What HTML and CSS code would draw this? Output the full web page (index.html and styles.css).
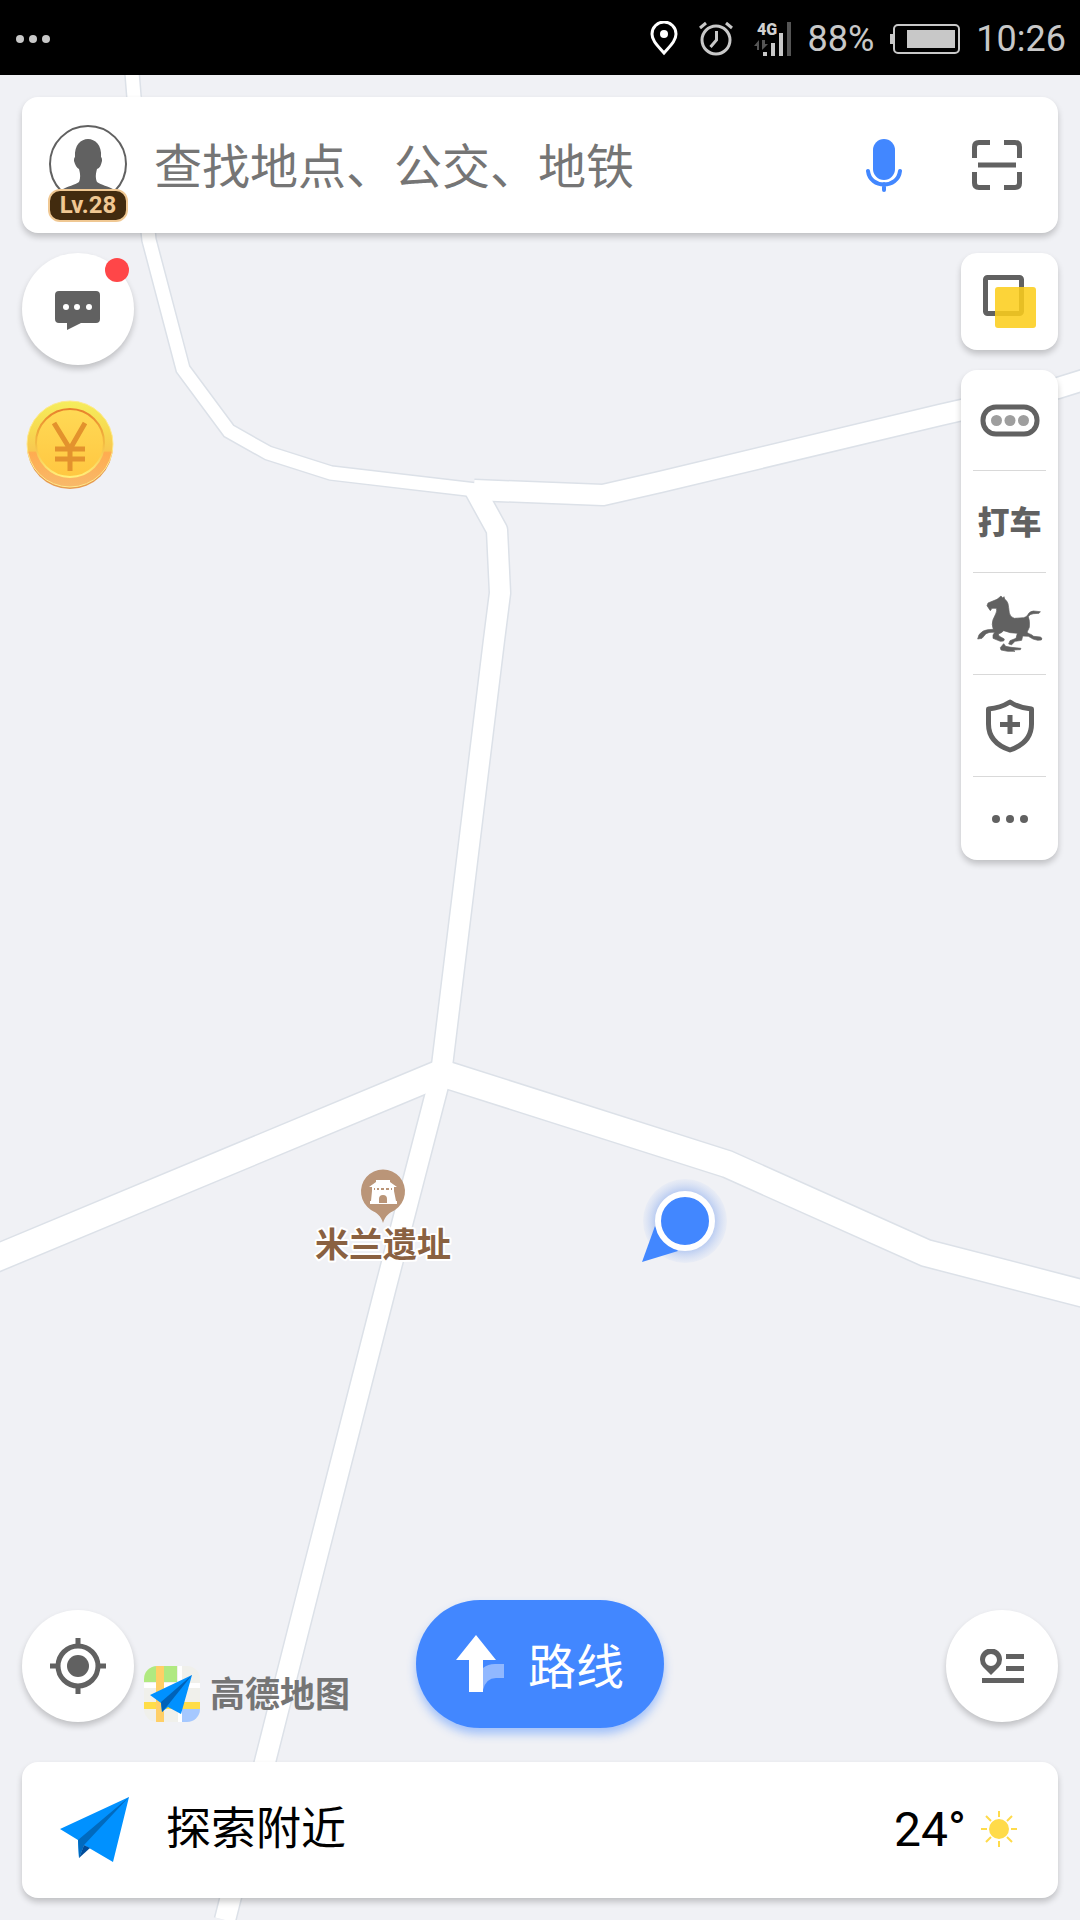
FILE: index.html
```html
<!DOCTYPE html>
<html lang="zh-CN">
<head>
<meta charset="utf-8">
<meta name="viewport" content="width=device-width, initial-scale=1">
<title>高德地图</title>
<link rel="stylesheet" href="styles.css">
</head>
<body>
<div class="app">
  <header class="status">
    <svg class="status-more" width="36" height="8" viewBox="0 0 36 8" fill="#c8c8c8"><circle cx="4" cy="4" r="4"/><circle cx="17" cy="4" r="4"/><circle cx="30" cy="4" r="4"/></svg>
    <div class="status-icons">
      <svg width="28" height="36" viewBox="0 0 28 36"><path d="M14 32C8 25 2 20 2 13a12 12 0 0 1 24 0c0 7-6 12-12 19z" fill="none" stroke="#fff" stroke-width="3"/><circle cx="14" cy="13" r="4" fill="#fff"/></svg>
      <svg class="alarm" width="34" height="36" viewBox="0 0 34 36" fill="none" stroke="#c8c8c8" stroke-width="3"><circle cx="17" cy="19" r="14"/><path d="M17.500 10v9l-6 7M1 7l6-5M27 2l6 5"/></svg>
      <svg width="38" height="42" viewBox="0 -4 38 42"><text class="net-label" x="3" y="13" fill="#d0d0d0">4G</text><g fill="#c8c8c8"><path d="M9 30h4v4H9zM17 21h4v13h-4zM25 11h4v23h-4z"/><path d="M33 0h4v34h-4z" fill="#555"/><path d="M0 24l5-6v10H3v-4zM8 18v10l6-6h-3v-4z" fill="#555"/></g></svg>
      <span class="percent">88%</span>
      <svg width="70" height="32" viewBox="0 0 70 32"><rect x="4" y="2" width="65" height="28" rx="4" fill="none" stroke="#c8c8c8" stroke-width="2"/><path d="M0 11h4v10H0zM17 7h48v18H17z" fill="#c8c8c8"/></svg>
      <time>10:26</time>
    </div>
  </header>

  <main class="stage">
    <svg class="map" viewBox="0 75 1080 1845" preserveAspectRatio="xMidYMid slice" role="img" aria-label="地图">
      <defs>
        <g id="roads" fill="none">
          <path class="road-s" d="M131 60L134 97 149 240 183 369 229 431 268 453 331 473 476 490"/>
          <path class="road-m" d="M474 490L603 495 660 482 940 415 1058 388 1090 378"/>
          <path class="road-m" d="M475 490L497 530 500 593 494 640 441 1074 385 1290 311 1580 225 1920"/>
          <path class="road-l" d="M-20 1265L441 1073 727 1164 926 1253 1100 1298"/>
        </g>
        <radialGradient id="glow"><stop offset="0.6" stop-color="#6f98ea" stop-opacity="0.600"/><stop offset="1" stop-color="#a9c3f5" stop-opacity="0.100"/></radialGradient>
      </defs>
      <use href="#roads" class="casing"/>
      <use href="#roads" class="surface"/>
      <path d="M383 1223c-2-7-6-10-12-13a22 22 0 1 1 24 0c-6 3-10 6-12 13z" fill="#ba9578"/>
      <path d="M376 1180h14v2l7 5h-3v4h-22v-4h-3l7-5zM372 1191h22l2 10h1v3H370v-3h1z" fill="#fff"/>
      <path d="M379 1203v-4a4 4 0 0 1 8 0v4zM374 1188h18v2h-18z" fill="#ba9578"/>
      <path d="M376 1187v4M380 1187v4M385 1187v4M390 1187v4" stroke="#fff" stroke-width="2"/>
      <text class="poi" x="383" y="1257" text-anchor="middle">米兰遗址</text>
      <circle cx="685" cy="1221" r="42" fill="url(#glow)"/>
      <path d="M655 1226L642 1262 678 1251z" fill="#4287ff"/>
      <circle cx="685" cy="1221" r="27" fill="#4287ff" stroke="#fff" stroke-width="6"/>
    </svg>

    <div class="overlay">
      <form class="card search">
        <button type="button" class="avatar" aria-label="我的账户">
          <svg width="80" height="80" viewBox="0 0 80 80"><circle cx="40" cy="40" r="38" fill="#fff" stroke="#616161" stroke-width="2"/><path d="M13 66c7-4 14-5 18-8 2-5 1-9 0-13-2-1-4-4-5-8 0-2 0-3 1-4-2-24 28-24 26 0 1 1 1 2 1 4-1 4-2 7-5 8-1 4-2 8 0 13 4 3 11 4 18 8l-14 8H27z" fill="#616161"/></svg>
          <span class="level">Lv.28</span>
        </button>
        <input class="query" type="text" aria-label="搜索" placeholder="查找地点、公交、地铁">
        <button type="button" aria-label="语音搜索"><svg width="36" height="53" viewBox="0 0 36 53"><rect x="7" width="22" height="41" rx="11" fill="#4287ff"/><path d="M2 32c2 18 30 18 32 0M18 45v6" fill="none" stroke="#4287ff" stroke-width="4" stroke-linecap="round"/></svg></button>
        <button type="button" aria-label="扫一扫"><svg width="50" height="50" viewBox="0 0 50 50" fill="none" stroke="#616161" stroke-width="5"><path d="M2.500 18V7q0-4.500 4.500-4.500h11M32 2.500h11q4.500 0 4.500 4.500v11M47.500 32v11q0 4.500-4.500 4.500H32M18 47.500H7q-4.500 0-4.500-4.500V32M6 25h38"/></svg></button>
      </form>

      <div class="sides">
        <div class="left">
          <button type="button" class="round message" aria-label="消息">
            <svg width="46" height="40" viewBox="0 0 46 40"><path d="M4 0h37a4 4 0 0 1 4 4v24a4 4 0 0 1-4 4H26l-14 7v-7H4a4 4 0 0 1-4-4V4a4 4 0 0 1 4-4z" fill="#616161"/><g fill="#fff"><circle cx="11" cy="16" r="3"/><circle cx="22" cy="16" r="3"/><circle cx="34" cy="16" r="3"/></g></svg>
            <span class="dot"></span>
          </button>
          <button type="button" class="coin" aria-label="金币">
            <svg width="88" height="90" viewBox="0 0 88 90"><defs><linearGradient id="rim" x2="0" y2="1"><stop stop-color="#f5ed5c"/><stop offset="0.350" stop-color="#f7d950"/><stop offset="0.580" stop-color="#f8c750"/><stop offset="0.600" stop-color="#ffac50"/><stop offset="1" stop-color="#f8b96a"/></linearGradient><linearGradient id="ring" x2="0" y2="1"><stop stop-color="#e8802b"/><stop offset="0.500" stop-color="#f3bb42"/><stop offset="1" stop-color="#fff07b"/></linearGradient><linearGradient id="face" x2="0" y2="1"><stop stop-color="#ffd955"/><stop offset="1" stop-color="#ffc741"/></linearGradient></defs><circle cx="44" cy="46" r="43" fill="#e79c51"/><circle cx="44" cy="44" r="43" fill="url(#rim)" stroke="#ffe98c"/><circle cx="44" cy="43" r="34" fill="url(#face)" stroke="url(#ring)" stroke-width="2"/><path d="M28 23l16 26 15-26M44 47v24M29 49h30M29 59h30" fill="none" stroke="#e3922d" stroke-width="5"/></svg>
          </button>
        </div>
        <div class="right">
          <button type="button" class="card layers" aria-label="图层"><svg width="54" height="54" viewBox="0 0 54 54"><rect x="2.500" y="2.500" width="36" height="36" rx="2" fill="none" stroke="#616161" stroke-width="5"/><rect x="12" y="12" width="41" height="41" rx="3" fill="#fcce1c" fill-opacity="0.870"/></svg></button>
          <nav class="card tools" aria-label="工具">
            <button type="button" aria-label="路况"><svg width="60" height="33" viewBox="0 0 60 33"><rect x="3" y="3" width="54" height="27" rx="13" fill="none" stroke="#616161" stroke-width="5"/><g fill="#9e9e9e"><circle cx="16.500" cy="16.500" r="5.500"/><circle cx="30" cy="16.500" r="5.500"/><circle cx="43.500" cy="16.500" r="5.500"/></g></svg></button>
            <button type="button" class="taxi">打车</button>
            <button type="button" aria-label="旅游"><svg width="66" height="57" viewBox="18 48 198 171" fill="#616161" stroke="#616161" stroke-width="2" stroke-linejoin="round"><path d="M83 57L90 51 95 57 99 53 101 60Q109 66 111 74L113 86 115 102Q118 115 130 118L158 116Q166 115 170 108 175 97 187 96L208 98 204 103 188 104Q176 105 172 113 177 125 175 145L168 160 174 164Q182 166 188 172L208 174Q216 178 211 183L200 184 186 180 172 172 155 171 152 184 132 187 122 197 113 195 117 185 135 178 139 163 118 161 98 155 91 161 82 165 84 171 100 180 98 186 88 187 66 178 66 168 71 160Q54 158 45 164L33 178 20 180 24 167Q35 153 50 152L67 151Q61 136 66 122L74 105Q79 95 76 88L63 88 58 95 48 80 51 72 78 61Z"/><path d="M88 206L98 194 104 202 120 205 150 208 148 212 126 213 132 217 110 217 90 213Z"/></svg></button>
            <button type="button" aria-label="安全"><svg width="50" height="54" viewBox="0 0 50 54"><path d="M25 3q9 6 21.500 7v15c0 14-10 22-21.500 26C13 47 3.500 39 3.500 25V10q12-1 21.500-7z" fill="none" stroke="#616161" stroke-width="5" stroke-linejoin="round"/><path d="M25 16v19M15 25.500h20" stroke="#616161" stroke-width="5"/></svg></button>
            <button type="button" aria-label="更多"><svg width="36" height="8" viewBox="0 0 36 8" fill="#616161"><circle cx="4" cy="4" r="4"/><circle cx="18" cy="4" r="4"/><circle cx="32" cy="4" r="4"/></svg></button>
          </nav>
        </div>
      </div>

      <div class="actions">
        <div class="actions-left">
          <button type="button" class="round" aria-label="定位"><svg width="56" height="56" viewBox="0 0 56 56"><circle cx="28" cy="28" r="20" fill="none" stroke="#616161" stroke-width="5"/><circle cx="28" cy="28" r="11" fill="#616161"/><path d="M28 0v8M28 48v8M0 28h8M48 28h8" stroke="#616161" stroke-width="5"/></svg></button>
          <div class="brand">
            <svg width="56" height="56" viewBox="0 0 56 56"><defs><clipPath id="tile"><rect width="56" height="56" rx="13"/></clipPath></defs><g clip-path="url(#tile)"><path d="M0 0h56v56H0z" fill="#f0f0eb"/><path d="M0 0h33v16H0z" fill="#b0e980"/><path d="M34 0h4v56h-4zM0 17h56v5H0z" fill="#fff"/><path d="M0 36h56v7H0z" fill="#ffdd48"/><path d="M38 43h18v13H38z" fill="#a5c8ff"/><path d="M12 0h8v56h-8z" fill="#ffcf66"/></g><path d="M6 29L48 9 37 48 24 41l-6 5-1-9z" fill="#0091ff"/><path d="M48 9L17 36l1 10 6-7z" fill="#0062b8"/></svg>
            <span>高德地图</span>
          </div>
        </div>
        <button type="button" class="route"><svg width="48" height="57" viewBox="0 0 48 57"><path d="M27 33q5-4 12-4h9v14h-8q-10 0-13 12z" fill="#91b8ff"/><path d="M20 0l20 25H27v32H13V25H0z" fill="#fff"/></svg><span>路线</span></button>
        <button type="button" class="round places" aria-label="收藏地点"><svg width="44" height="34" viewBox="0 0 44 34"><path d="M11 26L3 18a11 11 0 1 1 16 0zM11 5a6 6 0 1 0 0 12 6 6 0 0 0 0-12z" fill="#616161" fill-rule="evenodd"/><path d="M26 5h18v5H26zM26 17h18v5H26zM2 29h42v5H2z" fill="#616161"/></svg></button>
      </div>

      <footer class="card nearby">
        <a href="#nearby" class="explore"><svg width="70" height="66" viewBox="0 0 70 66"><path d="M0 32L69 0 53 65 24 48 19 61 18 43z" fill="#0091ff"/><path d="M69 0L18 43l1 18 5-13z" fill="#006abf"/><path d="M24 48l6 3-11 10z" fill="#004c9a"/></svg><span>探索附近</span></a>
        <span class="weather">24° <svg width="38" height="38" viewBox="0 0 38 38"><circle cx="19" cy="19" r="10" fill="#ffdb4a"/><path d="M19 1v6M19 31v6M1 19h6M31 19h6M6 6l5 5M27 27l5 5M32 6l-5 5M11 27l-5 5" stroke="#ffdb4a" stroke-width="2"/></svg></span>
      </footer>
    </div>
  </main>
</div>
</body>
</html>
```
FILE: styles.css
```css
* { box-sizing: border-box; }

body {
  margin: 0;
  font-family: Roboto, "Noto Sans CJK SC", sans-serif;
  color: #000;
}

svg { display: block; flex: none; }

button {
  display: flex;
  align-items: center;
  justify-content: center;
  padding: 0;
  border: 0;
  background: none;
  font: inherit;
  color: #616161;
}

.app {
  display: flex;
  flex-direction: column;
  min-height: 100vh;
}

/* Status bar */
.status {
  display: flex;
  align-items: center;
  justify-content: space-between;
  height: 75px;
  padding: 2px 14px 0 16px;
  background: #000;
  color: #c8c8c8;
  font-size: 36px;
  line-height: 40px;
}

.status-icons {
  display: flex;
  align-items: center;
  gap: 16px;
}

.alarm { margin: 0 5px; }

.net-label { font: 900 16px Roboto, sans-serif; }

/* Map */
.stage {
  position: relative;
  display: flex;
  flex: 1;
  background: #f0f1f5;
}

.map {
  position: absolute;
  inset: 0;
  width: 100%;
  height: 100%;
}

.casing {
  --edge: 3px;
  stroke: #dce1e8;
}

.surface {
  --edge: 0px;
  stroke: #fff;
}

.road-s { stroke-width: calc(13px + var(--edge)); }
.road-m { stroke-width: calc(20px + var(--edge)); stroke-linejoin: round; }
.road-l { stroke-width: calc(26px + var(--edge)); }

.poi {
  font: 700 34px "Noto Sans CJK SC", sans-serif;
  fill: #8a6141;
  stroke: #fff;
  stroke-width: 4px;
  stroke-linejoin: round;
  paint-order: stroke;
}

/* Controls above the map */
.overlay {
  position: relative;
  display: flex;
  flex: 1;
  flex-direction: column;
  padding: 22px;
}

.card {
  border-radius: 16px;
  background: #fff;
  box-shadow: 0 4px 6px rgba(0, 0, 0, 0.2);
}

.search {
  display: flex;
  align-items: center;
  height: 136px;
  padding: 0 36px 0 26px;
}

.avatar {
  flex-direction: column;
  width: 80px;
  padding-top: 16px;
}

.level {
  width: 80px;
  margin-top: -15px;
  border: 2px solid #f0c893;
  border-radius: 12px;
  background: #422b0f;
  color: #f0c893;
  font-size: 24px;
  font-weight: 700;
  line-height: 29px;
  text-align: center;
}

.query {
  flex: 1;
  min-width: 0;
  padding: 0 26px 4px;
  border: 0;
  background: none;
  font: 48px/72px "Noto Sans CJK SC", sans-serif;
  color: #000;
}

.query::placeholder { color: #757575; opacity: 1; }

.search button + button { margin-left: 70px; }

.sides {
  display: flex;
  flex: 1;
  align-items: flex-start;
  justify-content: space-between;
  padding: 20px 0;
}

.round {
  flex: none;
  width: 112px;
  height: 112px;
  border-radius: 50%;
  background: #fff;
  box-shadow: 0 4px 6px rgba(0, 0, 0, 0.2);
}

.message {
  position: relative;
  padding-top: 4px;
}

.dot {
  position: absolute;
  top: 5px;
  right: 5px;
  width: 24px;
  height: 24px;
  border-radius: 50%;
  background: #ff4648;
}

.coin { margin: 35px 0 0 4px; }

.right {
  display: flex;
  flex-direction: column;
  gap: 20px;
  width: 97px;
}

.layers { height: 97px; }

.tools {
  display: flex;
  flex-direction: column;
  padding: 0 12px;
}

.tools button {
  height: 102px;
  border-bottom: 1px solid #d9d9d9;
}

.tools button:first-child { height: 101px; }

.tools button:last-child {
  height: 83px;
  border-bottom: 0;
}

.tools .taxi {
  padding-bottom: 4px;
  font-size: 32px;
  font-weight: 900;
  white-space: nowrap;
}

.actions {
  display: grid;
  grid-template-columns: 1fr auto 1fr;
  align-items: end;
  margin-bottom: 34px;
}

.actions .round { margin-bottom: 6px; }

.actions-left {
  display: flex;
  align-items: flex-end;
  gap: 10px;
}

.brand {
  display: flex;
  align-items: center;
  gap: 10px;
  margin-bottom: 6px;
  font-size: 35px;
  font-weight: 700;
  line-height: 52px;
  color: #757575;
  white-space: nowrap;
}

.brand span { padding-top: 4px; }

.places { justify-self: end; }

.route {
  gap: 24px;
  width: 248px;
  height: 128px;
  padding-bottom: 2px;
  border-radius: 64px;
  background: #4287ff;
  box-shadow: 0 6px 10px rgba(66, 135, 255, 0.45);
  color: #fff;
  font-size: 48px;
}

.nearby {
  display: flex;
  align-items: center;
  justify-content: space-between;
  height: 136px;
  padding: 0 40px 0 38px;
}

.explore {
  display: flex;
  align-items: center;
  gap: 36px;
  color: #000;
  font-size: 45px;
  line-height: 64px;
  text-decoration: none;
}

.weather {
  display: flex;
  align-items: center;
  gap: 14px;
  padding-bottom: 2px;
  font-size: 48px;
}
```
